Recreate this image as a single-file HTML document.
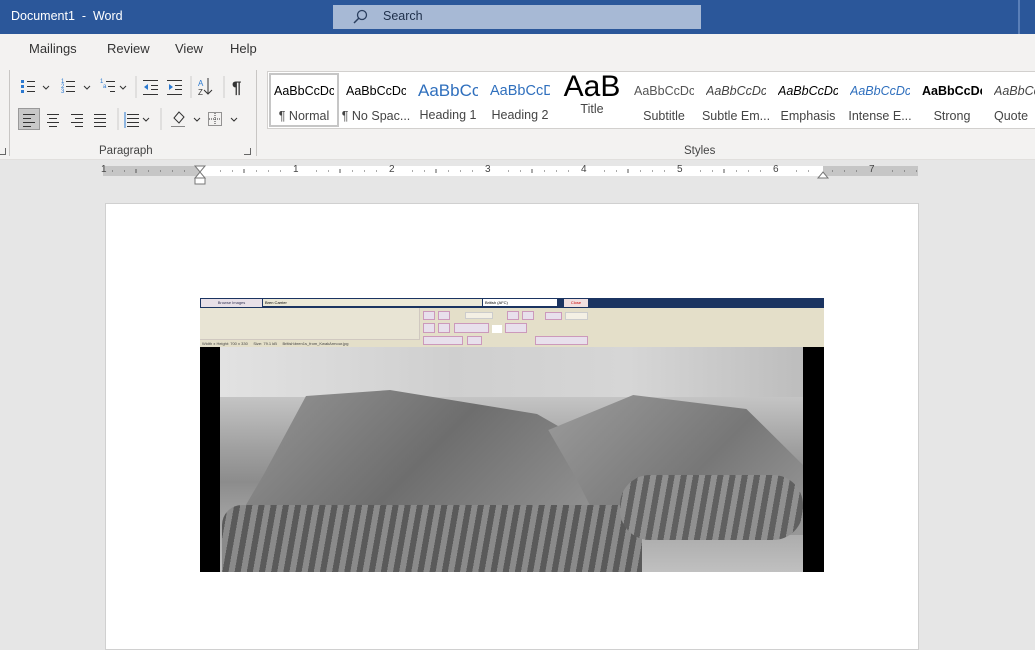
<!DOCTYPE html>
<html><head><style>
*{margin:0;padding:0;box-sizing:border-box}
body{width:1035px;height:650px;overflow:hidden;background:#e6e6e6;font-family:"Segoe UI","Liberation Sans",sans-serif;position:relative}
.a{position:absolute}
.t{white-space:nowrap}
.st{position:absolute;top:72px;width:72px;height:54px;text-align:center}
.st .p{font-size:12.5px;margin:12px auto 0;width:60px;height:17px;overflow:hidden;white-space:nowrap;font-family:"Liberation Sans",sans-serif}
.st .n{font-size:12.5px;color:#444;margin-top:8px;white-space:nowrap}
</style></head><body>
<div class="a" style="left:0;top:0;width:1035px;height:34px;background:#2b579a"></div>
<div class="a t" style="left:11px;top:9px;color:#fff;font-size:12.5px">Document1 &nbsp;-&nbsp; Word</div>
<div class="a" style="left:333px;top:5px;width:368px;height:24px;background:#a7b9d5"></div>
<svg class="a" style="left:352px;top:9px" width="16" height="16"><circle cx="10" cy="6" r="4.5" fill="none" stroke="#2b3f5f" stroke-width="1.3"/><line x1="7" y1="9" x2="2" y2="14" stroke="#2b3f5f" stroke-width="1.5"/></svg>
<div class="a t" style="left:383px;top:9px;color:#1e2f4a;font-size:12.5px">Search</div>
<div class="a" style="left:1018px;top:0;width:17px;height:34px;background:#2b579a;border-left:2px solid #5a7fb8"></div>
<div class="a" style="left:0;top:34px;width:1035px;height:126px;background:#f3f2f1;border-bottom:1px solid #e1dfdd"></div>
<div class="a t" style="left:29px;top:41px;font-size:13px;color:#333">Mailings</div>
<div class="a t" style="left:107px;top:41px;font-size:13px;color:#333">Review</div>
<div class="a t" style="left:175px;top:41px;font-size:13px;color:#333">View</div>
<div class="a t" style="left:230px;top:41px;font-size:13px;color:#333">Help</div>
<div class="a" style="left:9px;top:70px;width:1px;height:86px;background:#c8c6c4"></div>
<div class="a" style="left:256px;top:70px;width:1px;height:86px;background:#c8c6c4"></div>
<svg class="a" style="left:18px;top:76px" width="230" height="56">
<g fill="#2b79d0"><rect x="3" y="4" width="3" height="3"/><rect x="3" y="9" width="3" height="3"/><rect x="3" y="14" width="3" height="3"/></g>
<g stroke="#333"><line x1="9" y1="5.5" x2="17" y2="5.5"/><line x1="9" y1="10.5" x2="17" y2="10.5"/><line x1="9" y1="15.5" x2="17" y2="15.5"/>
<path d="M25 10l3 3 3-3" fill="none"/>
<line x1="48" y1="5.5" x2="57" y2="5.5"/><line x1="48" y1="10.5" x2="57" y2="10.5"/><line x1="48" y1="15.5" x2="57" y2="15.5"/>
<path d="M66 10l3 3 3-3" fill="none"/>
<line x1="88" y1="5.5" x2="97" y2="5.5"/><line x1="90" y1="10.5" x2="97" y2="10.5"/><line x1="92" y1="15.5" x2="97" y2="15.5"/>
<path d="M102 10l3 3 3-3" fill="none"/>
<line x1="125" y1="4.5" x2="140" y2="4.5"/><line x1="133" y1="9.5" x2="140" y2="9.5"/><line x1="133" y1="13.5" x2="140" y2="13.5"/><line x1="125" y1="18.5" x2="140" y2="18.5"/>
<line x1="149" y1="4.5" x2="164" y2="4.5"/><line x1="157" y1="9.5" x2="164" y2="9.5"/><line x1="157" y1="13.5" x2="164" y2="13.5"/><line x1="149" y1="18.5" x2="164" y2="18.5"/>
<path d="M190 2v16M186 14l4 4 4-4" fill="none"/></g>
<g fill="#2b79d0" font-size="6" font-family="Liberation Sans"><text x="43" y="7">1</text><text x="43" y="12">2</text><text x="43" y="17">3</text><text x="82" y="7">1</text><text x="85" y="12">a</text>
<path d="M126 11l4-3v6z M155 11l-4-3v6z"/></g>
<text x="180" y="10" font-size="8" fill="#2b79d0" font-family="Liberation Sans">A</text><text x="180" y="19" font-size="8" fill="#333" font-family="Liberation Sans">Z</text>
<text x="214" y="17" font-size="17" fill="#333" font-family="Liberation Sans" font-weight="bold">¶</text>
<line x1="118" y1="0" x2="118" y2="22" stroke="#ccc"/><line x1="173" y1="0" x2="173" y2="22" stroke="#ccc"/><line x1="206" y1="0" x2="206" y2="22" stroke="#ccc"/>
</svg>
<div class="a" style="left:18px;top:108px;width:22px;height:22px;background:#c8c8c8;border:1px solid #999"></div>
<svg class="a" style="left:18px;top:108px" width="230" height="22" stroke="#333">
<path d="M5 6.5h12M5 10.5h8M5 14.5h12M5 18.5h8"/>
<path d="M29 6.5h12M31 10.5h8M29 14.5h12M31 18.5h8"/>
<path d="M53 6.5h12M57 10.5h8M53 14.5h12M57 18.5h8"/>
<path d="M76 6.5h12M76 10.5h12M76 14.5h12M76 18.5h12"/>
<path d="M109 6.5h12M109 10.5h12M109 14.5h12M109 18.5h12" />
<path d="M107 4v16" stroke="#2b79d0"/><path d="M125 10l3 3 3-3M176 10l3 3 3-3M213 10l3 3 3-3" fill="none"/>
<path d="M161 4l-5 6 5 5 5-6z" fill="none"/><path d="M153 18.5h14" stroke="#888"/>
<rect x="190.5" y="4.5" width="13" height="13" fill="none" stroke-dasharray="1 1"/><path d="M197 5v12M191 11h12" stroke-dasharray="1 1"/>
<line x1="100" y1="0" x2="100" y2="22" stroke="#ccc"/><line x1="143" y1="0" x2="143" y2="22" stroke="#ccc"/>
</svg>
<div class="a t" style="left:99px;top:145px;font-size:11.5px;color:#444">Paragraph</div>
<div class="a" style="left:244px;top:148px;width:7px;height:7px;border:1px solid #666;border-top:none;border-left:none"></div>
<div class="a" style="left:0;top:148px;width:6px;height:7px;border-bottom:1px solid #666;border-right:1px solid #666"></div>
<div class="a" style="left:267px;top:71px;width:768px;height:58px;background:#fff;border:1px solid #d2d0ce;border-right:none"></div>
<div class="a" style="left:269px;top:73px;width:70px;height:54px;border:2px solid #c6c6c6"></div>
<div class="st" style="left:268px"><div class="p">AaBbCcDc</div><div class="n">¶ Normal</div></div>
<div class="st" style="left:340px"><div class="p">AaBbCcDc</div><div class="n">¶ No Spac...</div></div>
<div class="st" style="left:412px"><div class="p" style="color:#2f6fbd;font-size:17px;margin-top:9px;height:21px">AaBbCc</div><div class="n" style="margin-top:6px">Heading 1</div></div>
<div class="st" style="left:484px"><div class="p" style="color:#2f6fbd;font-size:14.5px;margin-top:11px;height:19px">AaBbCcD</div><div class="n" style="margin-top:6px">Heading 2</div></div>
<div class="st" style="left:556px"><div class="p" style="font-size:30px;margin-top:0px;height:30px;line-height:30px;width:70px">AaB</div><div class="n" style="margin-top:0px">Title</div></div>
<div class="st" style="left:628px"><div class="p" style="color:#555">AaBbCcDc</div><div class="n">Subtitle</div></div>
<div class="st" style="left:700px"><div class="p" style="color:#444;font-style:italic">AaBbCcDc</div><div class="n">Subtle Em...</div></div>
<div class="st" style="left:772px"><div class="p" style="font-style:italic">AaBbCcDc</div><div class="n">Emphasis</div></div>
<div class="st" style="left:844px"><div class="p" style="color:#2f6fbd;font-style:italic">AaBbCcDc</div><div class="n">Intense E...</div></div>
<div class="st" style="left:916px"><div class="p" style="font-weight:bold">AaBbCcDc</div><div class="n">Strong</div></div>
<div class="st" style="left:988px;text-align:left;padding-left:6px"><div class="p" style="color:#444;font-style:italic;margin-left:0">AaBbCc</div><div class="n">Quote</div></div>
<div class="a t" style="left:684px;top:145px;font-size:11.5px;color:#444">Styles</div>
<div class="a" style="left:103px;top:166px;width:815px;height:10px;background:#c6c6c6"></div>
<div class="a" style="left:200px;top:166px;width:623px;height:10px;background:#fff"></div>
<div class="a t" style="left:0;top:164px;width:1035px;height:14px;font-size:10px;color:#444;font-family:'Liberation Sans'">
<span class="a" style="left:101px">1</span><span class="a" style="left:293px">1</span><span class="a" style="left:389px">2</span><span class="a" style="left:485px">3</span><span class="a" style="left:581px">4</span><span class="a" style="left:677px">5</span><span class="a" style="left:773px">6</span><span class="a" style="left:869px">7</span></div>
<svg class="a" style="left:100px;top:163px" width="830" height="22">
<path d="M95 3h10l-5 6zM95 15h10l-5-6zM95 15h10v6h-10z" fill="#fff" stroke="#777"/>
<path d="M718 15h10l-5-6z" fill="#fff" stroke="#777"/>
</svg>
<svg class="a" style="left:100px;top:163px" width="830" height="16">
<g stroke="#555">
<path d="M12 8h1M24 8h1M36 6v4M48 8h1M60 8h1M72 8h1M84 8h1M120 8h1M132 8h1M144 6v4M156 8h1M168 8h1M180 8h1M216 8h1M228 8h1M240 6v4M252 8h1M264 8h1M276 8h1M312 8h1M324 8h1M336 6v4M348 8h1M360 8h1M372 8h1M408 8h1M420 8h1M432 6v4M444 8h1M456 8h1M468 8h1M504 8h1M516 8h1M528 6v4M540 8h1M552 8h1M564 8h1M600 8h1M612 8h1M624 6v4M636 8h1M648 8h1M660 8h1M696 8h1M708 8h1M732 8h1M744 8h1M756 8h1M792 8h1M804 8h1M816 8h1"/>
</g></svg>
<div class="a" style="left:105px;top:203px;width:814px;height:447px;background:#fff;border:1px solid #d0d0d0"></div>
<div class="a" style="left:200px;top:298px;width:624px;height:274px;background:#000"></div>
<div class="a" style="left:200px;top:298px;width:624px;height:10px;background:#1b3461"></div>
<div class="a" style="left:200px;top:308px;width:624px;height:39px;background:#e4dfc9"></div>
<div class="a" style="left:201px;top:299px;width:61px;height:8px;background:#e8e0e8;font-size:4px;color:#335;text-align:center;line-height:8px">Browse Images</div>
<div class="a" style="left:263px;top:299px;width:219px;height:7px;background:#ece9d8;font-size:4px;line-height:7px;padding-left:2px">Bren Carrier</div>
<div class="a" style="left:483px;top:299px;width:74px;height:7px;background:#fff;font-size:4px;line-height:7px;padding-left:2px">British (AFC)</div>
<div class="a" style="left:564px;top:299px;width:24px;height:8px;background:#f0e0e0;font-size:4px;color:#c00;text-align:center;line-height:8px">Close</div>
<div class="a" style="left:200px;top:308px;width:220px;height:31px;background:#e8e4d4;border-right:1px solid #d0c8c0"></div>
<div class="a" style="left:200px;top:339px;width:220px;height:8px;font-size:4px;color:#444;line-height:8px;padding-left:2px;border-top:1px solid #d0c8c0">Width x Height: 700 x 330 &nbsp;&nbsp;&nbsp; Size: 79.1 kB &nbsp;&nbsp;&nbsp; British\bren1s_from_KwakArmour.jpg</div>
<div class="a" style="left:423px;top:311px;width:12px;height:9px;background:#e8e0ec;border:1px solid #c9b"></div>
<div class="a" style="left:438px;top:311px;width:12px;height:9px;background:#e8e0ec;border:1px solid #c9b"></div>
<div class="a" style="left:465px;top:312px;width:28px;height:7px;background:#f4f0e4;border:1px solid #ccc"></div>
<div class="a" style="left:507px;top:311px;width:12px;height:9px;background:#e8e0ec;border:1px solid #c9b"></div>
<div class="a" style="left:522px;top:311px;width:12px;height:9px;background:#e8e0ec;border:1px solid #c9b"></div>
<div class="a" style="left:545px;top:312px;width:17px;height:8px;background:#e8e0ec;border:1px solid #c9b"></div>
<div class="a" style="left:565px;top:312px;width:23px;height:8px;background:#f4f0e4;border:1px solid #ccc"></div>
<div class="a" style="left:423px;top:323px;width:12px;height:10px;background:#e8e0ec;border:1px solid #c9b"></div>
<div class="a" style="left:438px;top:323px;width:12px;height:10px;background:#e8e0ec;border:1px solid #c9b"></div>
<div class="a" style="left:454px;top:323px;width:35px;height:10px;background:#e8e0ec;border:1px solid #c9b"></div>
<div class="a" style="left:492px;top:325px;width:10px;height:8px;background:#fff"></div>
<div class="a" style="left:505px;top:323px;width:22px;height:10px;background:#e8e0ec;border:1px solid #c9b"></div>
<div class="a" style="left:423px;top:336px;width:40px;height:9px;background:#e8e0ec;border:1px solid #c9b"></div>
<div class="a" style="left:467px;top:336px;width:15px;height:9px;background:#e8e0ec;border:1px solid #c9b"></div>
<div class="a" style="left:535px;top:336px;width:53px;height:9px;background:#e8e0ec;border:1px solid #c9b"></div>
<div class="a" style="left:220px;top:347px;width:583px;height:225px;background:linear-gradient(180deg,#dcdcdc 0%,#c8c8c8 20%,#a0a0a0 45%,#8c8c8c 60%,#a8a8a8 80%,#c0c0c0 100%)"></div>
<div class="a" style="left:220px;top:347px;width:583px;height:50px;background:linear-gradient(90deg,#e2e2e2,#cfcfcf 40%,#d6d6d6 70%,#bdbdbd)"></div>
<div class="a" style="left:222px;top:390px;width:420px;height:120px;background:linear-gradient(135deg,#9a9a9a,#6e6e6e 50%,#999);clip-path:polygon(10% 70%,20% 5%,40% 0,75% 20%,100% 70%,90% 100%,5% 100%)"></div>
<div class="a" style="left:520px;top:395px;width:283px;height:140px;background:linear-gradient(135deg,#a0a0a0,#777 60%,#999);clip-path:polygon(10% 25%,40% 0,80% 10%,100% 50%,100% 100%,30% 100%,20% 60%)"></div>
<div class="a" style="left:222px;top:505px;width:420px;height:67px;background:repeating-linear-gradient(100deg,#5a5a5a 0 6px,#8a8a8a 6px 12px);border-radius:20px 20px 0 0"></div>
<div class="a" style="left:620px;top:475px;width:183px;height:65px;background:repeating-linear-gradient(100deg,#606060 0 6px,#909090 6px 12px);border-radius:30px"></div>
</body></html>
